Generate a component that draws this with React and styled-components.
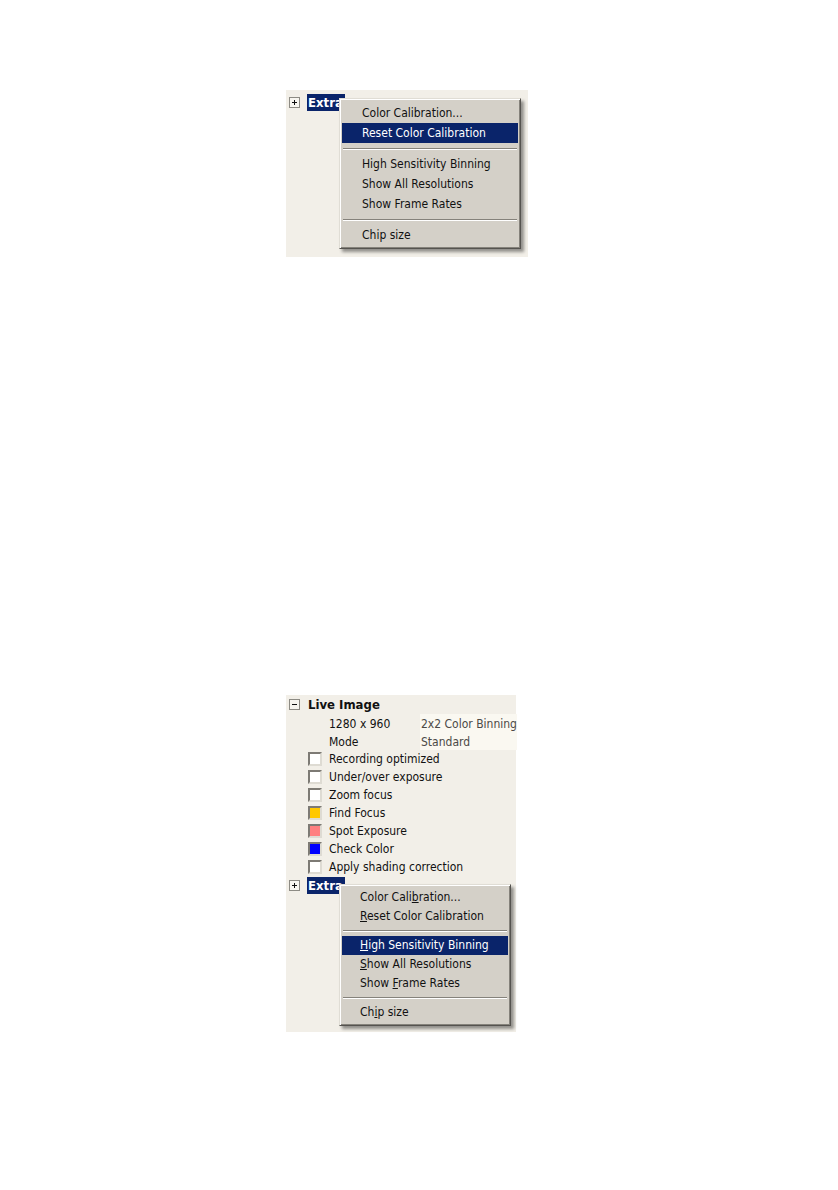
import React from "react";
import styled, { createGlobalStyle, css } from "styled-components";

const GlobalStyle = createGlobalStyle`
  *, *::before, *::after { box-sizing: border-box; }
  body {
    margin: 0;
    background: #fff;
    color: #111;
    font-family: Tahoma, "DejaVu Sans Condensed", "DejaVu Sans", sans-serif;
    font-size: 12px;
  }
`;

const Page = styled.main`
  display: flex;
  flex-direction: column;
  gap: 438px;
  padding: 90px 24px 158px 286px;
`;

const Panel = styled.section`
  width: 100%;
  max-width: ${(p) => p.$max}px;
  padding: ${(p) => p.$padding};
  background: #f2efe8;
`;

const TreeRow = styled.div`
  position: relative;
  display: flex;
  align-items: center;
  height: ${(p) => p.$height}px;
  padding-left: 3px;
`;

const Toggle = styled.button`
  display: flex;
  flex: none;
  width: 11px;
  height: 11px;
  margin: 0 7px 0 0;
  padding: 0;
  border: 1px solid #8d8b84;
  background: #f8f6f0;
`;

const NodeLabel = styled.h2`
  margin: 0;
  padding: 0 2px 0 1px;
  font-size: 13px;
  line-height: 17px;
  font-weight: bold;
  ${(p) =>
    p.$selected &&
    css`
      background: #0a246a;
      color: #fff;
    `}
`;

const Menu = styled.div`
  position: absolute;
  z-index: 1;
  top: ${(p) => p.$top}px;
  left: 53px;
  width: ${(p) => p.$width}px;
  padding: ${(p) => p.$padding};
  border: 1px solid;
  border-color: #e0ddd5 #55534f #55534f #e0ddd5;
  background: #d4d0c8;
  box-shadow: inset 1px 1px 0 #fff, inset -1px -1px 0 #85827b,
    3px 3px 3px rgba(0, 0, 0, 0.4);
`;

const MenuItem = styled.button`
  display: block;
  width: 100%;
  height: ${(p) => p.$height}px;
  padding: 0 0 0 ${(p) => p.$indent}px;
  border: 0;
  background: ${(p) => (p.$active ? "#0a246a" : "transparent")};
  color: ${(p) => (p.$active ? "#fff" : "#111")};
  font-family: inherit;
  font-size: 12px;
  line-height: ${(p) => p.$height}px;
  text-align: left;
  white-space: nowrap;
`;

const Separator = styled.hr`
  height: 2px;
  margin: ${(p) => p.$margin};
  border: 0;
  border-top: 1px solid #85827b;
  border-bottom: 1px solid #fff;
`;

const Properties = styled.dl`
  display: grid;
  grid-template-columns: 134px 1fr;
  margin: 0;
  line-height: 15px;
`;

const PropertyName = styled.dt`
  height: 18px;
  padding: 3px 0 0 43px;
`;

const PropertyValue = styled.dd`
  height: 18px;
  margin: 0;
  padding: 3px 0 0 1px;
  background: #faf8f1;
  color: #4c4a46;
  white-space: nowrap;
`;

const OptionRow = styled.label`
  display: flex;
  align-items: center;
  gap: 7px;
  height: 18px;
  padding-left: 22px;
  white-space: nowrap;
`;

const CheckBox = styled.input`
  appearance: none;
  flex: none;
  width: 14px;
  height: 14px;
  margin: 0;
  border: 2px solid;
  border-color: #7d7a74 #dedbd3 #dedbd3 #7d7a74;
  background: ${(p) => p.$fill};
`;

function ToggleIcon({ open }) {
  return (
    <svg width="9" height="9" viewBox="0 0 9 9" aria-hidden="true">
      <path
        d={open ? "M2 4.5H7" : "M2 4.5H7M4.5 2V7"}
        stroke="#111"
        strokeWidth="1"
        shapeRendering="crispEdges"
      />
    </svg>
  );
}

function TreeNode({ name, open, selected, height, children }) {
  return (
    <TreeRow $height={height}>
      <Toggle type="button" aria-label={name} aria-expanded={Boolean(open)}>
        <ToggleIcon open={open} />
      </Toggle>
      <NodeLabel $selected={selected}>{name}</NodeLabel>
      {children}
    </TreeRow>
  );
}

const options = [
  ["Recording optimized", "#fff"],
  ["Under/over exposure", "#fff"],
  ["Zoom focus", "#fff"],
  ["Find Focus", "#ffc800"],
  ["Spot Exposure", "#ff8080"],
  ["Check Color", "#0000ff"],
  ["Apply shading correction", "#fff"],
];

export default function App() {
  const large = { $height: 20, $indent: 20 };
  const small = { $height: 19, $indent: 18 };
  return (
    <>
      <GlobalStyle />
      <Page>
        <Panel $max={242} $padding="3px 0 146px">
          <TreeNode name="Extra" selected height={18}>
            <Menu role="menu" $top={5} $width={182} $padding="4px 2px 3px">
              <MenuItem role="menuitem" {...large}>Color Calibration...</MenuItem>
              <MenuItem role="menuitem" {...large} $active>Reset Color Calibration</MenuItem>
              <Separator $margin="5px 1px 4px" />
              <MenuItem role="menuitem" {...large}>High Sensitivity Binning</MenuItem>
              <MenuItem role="menuitem" {...large}>Show All Resolutions</MenuItem>
              <MenuItem role="menuitem" {...large}>Show Frame Rates</MenuItem>
              <Separator $margin="5px 1px 4px" />
              <MenuItem role="menuitem" {...large}>Chip size</MenuItem>
            </Menu>
          </TreeNode>
        </Panel>

        <Panel $max={230} $padding="0 0 138px">
          <TreeNode name="Live Image" open height={19} />
          <Properties>
            <PropertyName>1280 x 960</PropertyName>
            <PropertyValue>2x2 Color Binning</PropertyValue>
            <PropertyName>Mode</PropertyName>
            <PropertyValue>Standard</PropertyValue>
          </Properties>
          {options.map(([label, fill]) => (
            <OptionRow key={label}>
              <CheckBox type="checkbox" $fill={fill} />
              {label}
            </OptionRow>
          ))}
          <TreeNode name="Extra" selected height={18}>
            <Menu role="menu" $top={8} $width={172} $padding="3px 2px">
              <MenuItem role="menuitem" {...small}>Color Cali<u>b</u>ration...</MenuItem>
              <MenuItem role="menuitem" {...small}><u>R</u>eset Color Calibration</MenuItem>
              <Separator $margin="4px 1px" />
              <MenuItem role="menuitem" {...small} $active><u>H</u>igh Sensitivity Binning</MenuItem>
              <MenuItem role="menuitem" {...small}><u>S</u>how All Resolutions</MenuItem>
              <MenuItem role="menuitem" {...small}>Show <u>F</u>rame Rates</MenuItem>
              <Separator $margin="4px 1px" />
              <MenuItem role="menuitem" {...small}>Ch<u>i</u>p size</MenuItem>
            </Menu>
          </TreeNode>
        </Panel>
      </Page>
    </>
  );
}
